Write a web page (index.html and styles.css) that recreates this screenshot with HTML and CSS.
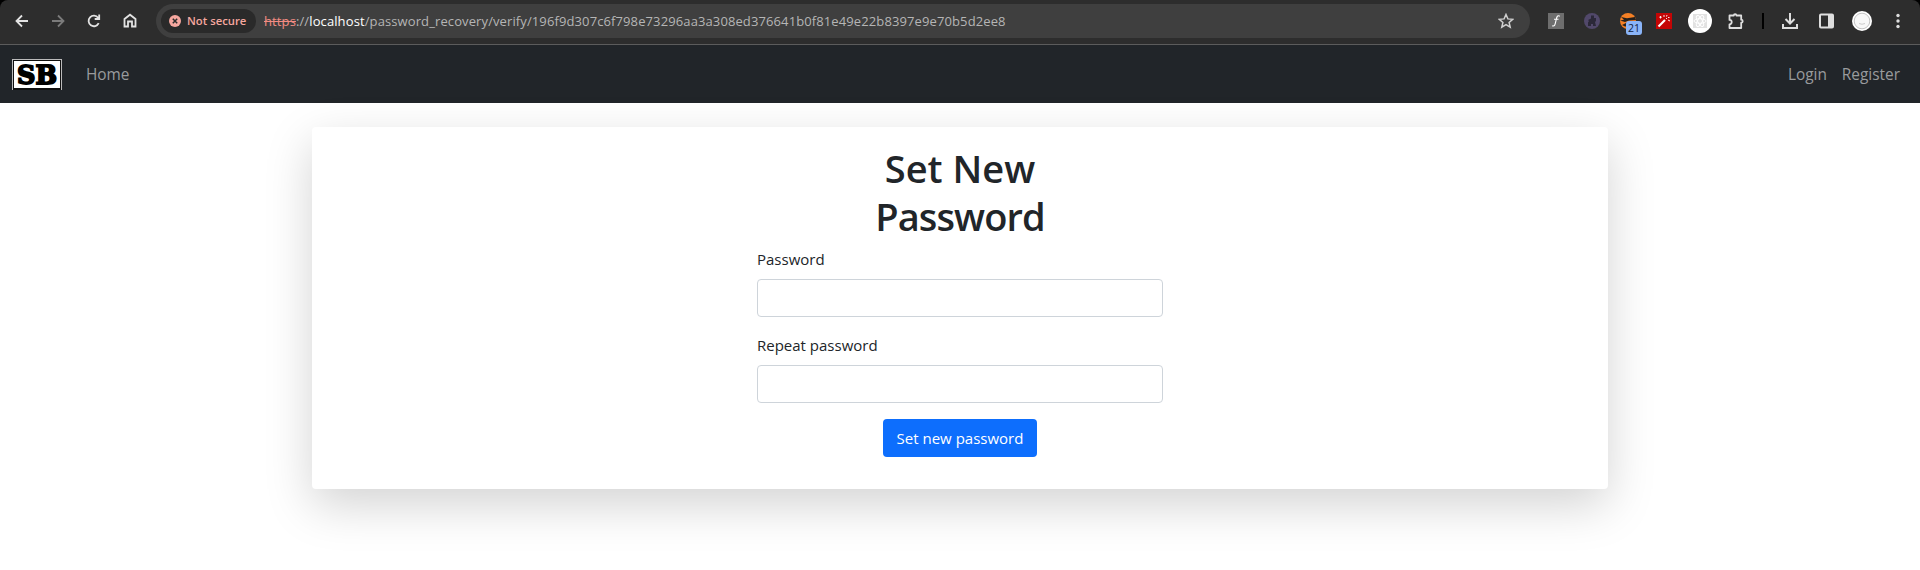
FILE: index.html
```html
<!DOCTYPE html>
<html lang="en">
<head>
<meta charset="utf-8">
<title>Set New Password</title>
<link rel="stylesheet" href="styles.css">
</head>
<body>
<div class="corners">
<header class="toolbar">
  <div class="nav-icons">
    <svg class="ic" viewBox="0 0 24 24"><path d="M18 12H7M12 6.500L6.500 12l5.500 5.500"/></svg>
    <svg class="ic dim" viewBox="0 0 24 24"><path d="M6 12h11M12 6.500l5.500 5.500-5.500 5.500"/></svg>
    <svg class="ic" viewBox="0 0 24 24"><path d="M16.700 14.200a5.300 5.300 0 1 1-.6-5.500M17.200 5.500v4.500h-4.500"/></svg>
    <svg class="ic" viewBox="0 0 24 24"><path d="M6.500 17.500V10L12 5.700 17.500 10v7.500H14v-5h-4v5z"/></svg>
  </div>
  <div class="omnibox">
    <div class="chip">
      <svg width="12" height="12" viewBox="0 0 12 12"><circle cx="6" cy="6" r="6" fill="#f6a79f"/><path d="M3.800 3.800l4.400 4.400M8.200 3.800L3.800 8.200" stroke="#2d2d2d" stroke-width="1.500"/></svg>
      <span class="chip-text">Not secure</span>
    </div>
    <div class="url"><s>https</s>://<b>localhost</b>/password_recovery/verify/196f9d307c6f798e73296aa3a308ed376641b0f81e49e22b8397e9e70b5d2ee8</div>
    <svg class="star" width="16" height="16" viewBox="0 0 16 16"><path d="M8 1.500l1.900 4.400 4.800.4-3.600 3.200 1.100 4.700L8 11.700l-4.200 2.500 1.100-4.700L1.300 6.300l4.800-.4z"/></svg>
  </div>
  <div class="extensions">
    <svg width="16" height="16" viewBox="0 0 16 16"><path fill="#6e6e6e" d="M0 0h16v16H0z"/><path d="M11.800 3.300C9.500 1.500 8.700 4 8 7.500s-1.200 6.300-3.800 5.300M6 6.300h4.500" fill="none" stroke="#fff" stroke-width="1.100"/></svg>
    <svg width="16" height="16" viewBox="0 0 16 16"><circle cx="8" cy="8" r="8" fill="#51486a"/><path d="M7 2.500h3V5h2v3l-1 1 1 4H9v-2H7v2H4V9.500L5 8 4 7l3-1.500z" fill="#2b2838"/></svg>
    <div class="fox">
      <svg width="16" height="16" viewBox="0 0 16 16"><circle cx="8" cy="8" r="8" fill="#f58025"/><path d="M1 4l6 1.300L15 4l1 3-7 .5L5 9 0 7.500l4-.8zM2 12l5-2.500 8 1v3H5z" fill="#24201d"/></svg>
      <span class="count">21</span>
    </div>
    <svg width="16" height="16" viewBox="0 0 16 16"><path fill="#c40505" d="M0 0h16v16H0z"/><path d="M2.500 13.500L9 7" stroke="#fff" stroke-width="2.200"/><path d="M10 6l1-1M4.500 3v2.500M3.300 4.200h2.500M8 2v2M11 2l-.5 1.500M13.500 4.500H12M12 7l2 1" stroke="#fff" stroke-width=".9"/></svg>
    <svg width="24" height="24" viewBox="0 0 24 24"><circle cx="12" cy="12" r="12" fill="#fff"/><path fill="#e2e2e2" d="M5 5h14v14H5z"/><g fill="none" stroke="#fff"><ellipse cx="12" cy="12" rx="6" ry="2.300"/><ellipse cx="12" cy="12" rx="6" ry="2.300" transform="rotate(60 12 12)"/><ellipse cx="12" cy="12" rx="6" ry="2.300" transform="rotate(120 12 12)"/></g></svg>
    <svg width="18" height="18" viewBox="0 0 18 18"><path d="M2.500 3.500h4.300a1.300 1.300 0 0 1 2.600 0h4.800v4.200a1.500 1.500 0 0 1 0 3V16H2.500v-3.700a2.200 2.200 0 0 0 0-4.400z" fill="none" stroke="#dedede" stroke-width="1.800" stroke-linejoin="round"/></svg>
    <i class="divider"></i>
    <svg width="16" height="16" viewBox="0 0 16 16"><path d="M8 0v10.500M3.500 6L8 10.500 12.500 6M1 11v4h14v-4" fill="none" stroke="#dedede" stroke-width="2"/></svg>
    <svg width="15" height="16" viewBox="0 0 15 16"><rect x="1" y="1.500" width="13" height="13" rx="1" fill="none" stroke="#dedede" stroke-width="2"/><path fill="#dedede" d="M9 1h5v14H9z"/></svg>
    <svg width="20" height="20" viewBox="0 0 20 20"><circle cx="10" cy="10" r="10" fill="#fff"/><circle cx="10" cy="10" r="7.800" fill="#f8f8f8" stroke="#c4c4c4"/><path d="M7 12.500q3 1.500 6 0" fill="none" stroke="#ccc"/></svg>
    <svg width="4" height="16" viewBox="0 0 4 16" fill="#dedede"><circle cx="2" cy="2.500" r="1.700"/><circle cx="2" cy="8" r="1.700"/><circle cx="2" cy="13.500" r="1.700"/></svg>
  </div>
</header>
</div>
<nav class="navbar">
  <svg class="logo" width="50" height="31" viewBox="0 0 50 31"><path fill="#bbb" d="M0 0h50v31H0z"/><path fill="#111" d="M1 1h48v30H1z"/><path fill="#fff" d="M2 2h46v27H2z"/><text x="5" y="25" textLength="40" lengthAdjust="spacingAndGlyphs" class="logo-text">SB</text></svg>
  <a class="link home">Home</a>
  <a class="link login">Login</a>
  <a class="link register">Register</a>
</nav>
<main class="page">
  <section class="card">
    <form class="form">
      <h1 class="title">Set New<br><span class="title-second">Password</span></h1>
      <label class="label" for="p1">Password</label>
      <input class="input" id="p1" type="password">
      <label class="label" for="p2">Repeat password</label>
      <input class="input" id="p2" type="password">
      <button class="submit" type="button">Set new password</button>
    </form>
  </section>
</main>
</body>
</html>
```
FILE: styles.css
```css
* { box-sizing: border-box; }
body { margin: 0; height: 570px; overflow: hidden; background: #fff; color: #212529; font-family: "Open Sans", "Noto Sans", sans-serif; }
svg { display: block; flex: none; }
.corners { background: #000; }
.toolbar { height: 45px; display: flex; align-items: center; padding: 0 0 3px; background: #2d2d2d; border-bottom: 1px solid #5c5c5c; border-radius: 8px 8px 0 0; }
.nav-icons { display: flex; gap: 12px; padding-left: 10px; width: 156px; }
.ic { width: 24px; height: 24px; fill: none; stroke: #e3e3e3; stroke-width: 1.800; }
.dim { stroke: #7b7b7b; }
.omnibox { width: 1374px; height: 34px; display: flex; align-items: center; border-radius: 17px; background: #3f3f3f; padding: 0 16px 0 5px; }
.chip { width: 95px; height: 24px; border-radius: 12px; background: #2a2a2a; display: flex; align-items: center; padding-left: 8px; gap: 6px; }
.chip-text { color: #f6a79f; font-size: 11.3px; font-weight: 600; white-space: nowrap; }
.url { margin-left: 8px; flex: 1; color: #b5b5b5; font-size: 13px; letter-spacing: .11px; white-space: nowrap; }
.url s { color: #f28b82; }
.url b { color: #fff; font-weight: 400; }
.star { fill: none; stroke: #d0d0d0; stroke-width: 1.500; }
.extensions { display: grid; grid-template-columns: repeat(6, 36px) 18px repeat(4, 36px); align-items: center; justify-items: center; margin-left: 8px; }
.fox { position: relative; }
.count { position: absolute; left: 6px; top: 8px; width: 16px; height: 14px; border-radius: 3px; background: #8ab4f8; color: #10213d; font-size: 10.500px; line-height: 14px; text-align: center; }
.divider { width: 2px; height: 16px; background: #000; }
.navbar { height: 58px; background: #212529; display: flex; align-items: center; padding: 0 20px 0 12px; }
.link { color: #999b9d; font-size: 15.400px; line-height: 24px; padding-top: 2px; }
.home { margin-left: 24px; }
.login { margin-left: auto; }
.register { margin-left: 15px; }
.logo-text { font-family: "DejaVu Serif", serif; font-weight: 700; font-size: 26px; stroke: #000; stroke-width: 1.800; }
.page { padding: 24px 312px; }
.card { height: 362px; border-radius: 4px; background: #fff; box-shadow: 0 16px 48px rgba(0,0,0,.175); padding-top: 17px; }
.form { width: 406px; margin: 0 auto; display: flex; flex-direction: column; }
.title { margin: 0 0 7px; font-size: 38px; line-height: 48px; font-weight: 600; text-align: center; }
.title-second { letter-spacing: -.9px; }
.label { font-size: 15px; line-height: 24px; margin-bottom: 8px; }
.input { height: 38px; border: 1px solid #ced4da; border-radius: 4px; background: #fff; margin: 0 0 16px; padding: 6px 12px; }
.submit { align-self: center; width: 154px; height: 38px; border: 0; border-radius: 4px; background: #0d6efd; color: #fff; font: 15px "Open Sans", sans-serif; white-space: nowrap; padding: 0; }
```
